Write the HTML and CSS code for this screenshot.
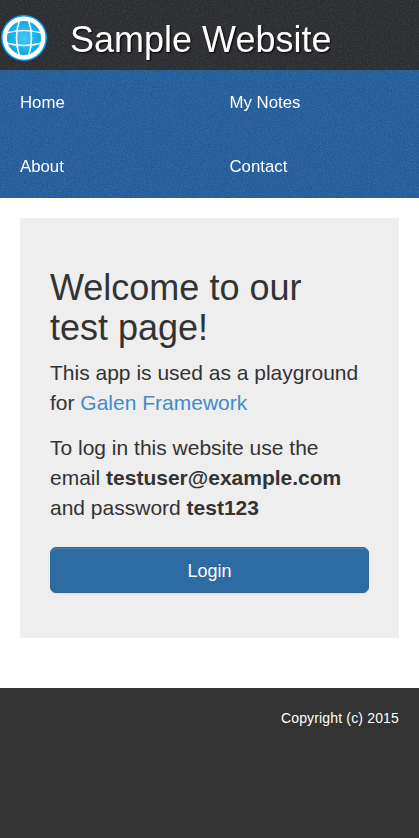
FILE: index.html
```html
<!DOCTYPE html>
<html lang="en">
<head>
<meta charset="utf-8">
<meta name="viewport" content="width=device-width, initial-scale=1">
<title>Sample Website</title>
<link rel="stylesheet" href="styles.css">
</head>
<body>
<header class="header">
  <svg class="texture" aria-hidden="true">
    <filter id="grain" x="0" y="0" width="100%" height="100%" color-interpolation-filters="sRGB">
      <feTurbulence type="fractalNoise" baseFrequency="0.7" numOctaves="3" seed="4"/>
      <feColorMatrix values="1.4 0 0 0 -0.2  1.4 0 0 0 -0.2  1.4 0 0 0 -0.2  0 0 0 0 1"/>
    </filter>
    <rect width="100%" height="100%" filter="url(#grain)"/>
  </svg>
  <svg class="logo" viewBox="0 0 46 46" aria-hidden="true">
    <defs>
      <radialGradient id="globe">
        <stop offset="0" stop-color="#45c8f5"/>
        <stop offset="0.8" stop-color="#08a5e8"/>
        <stop offset="1" stop-color="#0a9fe0"/>
      </radialGradient>
    </defs>
    <circle cx="23" cy="23" r="23" fill="url(#globe)"/>
    <g fill="none" stroke="#fff">
      <circle cx="23" cy="23" r="19.2" stroke-width="4.4"/>
      <path stroke-width="1.6" d="M18.500 5Q12.500 23 18.500 41M27.500 5Q33.500 23 27.500 41M5 18Q23 13 41 18M5 28Q23 33 41 28"/>
    </g>
  </svg>
  <h1 class="title">Sample Website</h1>
</header>
<nav class="menu">
  <svg class="texture" aria-hidden="true"><rect width="100%" height="100%" filter="url(#grain)"/></svg>
  <a href="#">Home</a>
  <a href="#">My Notes</a>
  <a href="#">About</a>
  <a href="#">Contact</a>
</nav>
<main class="welcome">
  <h1>Welcome to our test page!</h1>
  <p>This app is used as a playground for <a href="#">Galen Framework</a></p>
  <p>To log in this website use the email <b>testuser@example.com</b> and password <b>test123</b></p>
  <button class="login" type="button">Login</button>
</main>
<footer class="footer">Copyright (c) 2015</footer>
</body>
</html>
```
FILE: styles.css
```css
* { box-sizing: border-box; }

body {
  margin: 0;
  min-height: 100vh;
  display: flex;
  flex-direction: column;
  background: #fff;
  color: #333;
  font: 14px/20px "Liberation Sans", Arial, sans-serif;
}

a { text-decoration: none; }

.header {
  position: relative;
  isolation: isolate;
  display: flex;
  height: 70px;
  background: #303134;
}

.texture {
  position: absolute;
  inset: 0;
  z-index: -1;
  width: 100%;
  height: 100%;
  opacity: 0.22;
  mix-blend-mode: soft-light;
}

.logo {
  width: 46px;
  height: 46px;
  margin: 15px 23px 0 1px;
}

.title {
  margin: 20px 0 0;
  color: #fff;
  font-size: 36px;
  font-weight: 400;
  line-height: 39.6px;
  text-shadow: 1px 1px 2px #000;
}

.menu {
  position: relative;
  isolation: isolate;
  display: grid;
  grid-template-columns: 1fr 1fr;
  background: #29609d;
}

.menu a {
  padding: 21px 20px 19px;
  color: #fff;
  font-size: 16.8px;
  line-height: 24px;
}

.welcome {
  margin: 20px 20px 50px;
  padding: 50px 30px 45px;
  background: #eee;
}

.welcome h1 {
  margin: 0 0 10.8px;
  font-size: 36px;
  font-weight: 400;
  line-height: 39.6px;
}

.welcome p {
  margin: 0 0 15px;
  font-size: 21px;
  line-height: 30px;
}

.welcome p a { color: #428bca; }

.login {
  display: block;
  width: 100%;
  height: 46px;
  margin-top: 24px;
  padding: 2px 0 0;
  border: 1px solid #2b669a;
  border-radius: 6px;
  background: #2d6ca2;
  box-shadow: inset 0 1px 0 rgba(255, 255, 255, 0.15), 0 1px 1px rgba(0, 0, 0, 0.075);
  color: #fff;
  font: 18px/24px "Liberation Sans", Arial, sans-serif;
  text-shadow: 0 -1px 0 rgba(0, 0, 0, 0.2);
}

.footer {
  flex: 1;
  padding: 20px;
  background: #333;
  color: #fff;
  letter-spacing: 0.16px;
  text-align: right;
}
```
